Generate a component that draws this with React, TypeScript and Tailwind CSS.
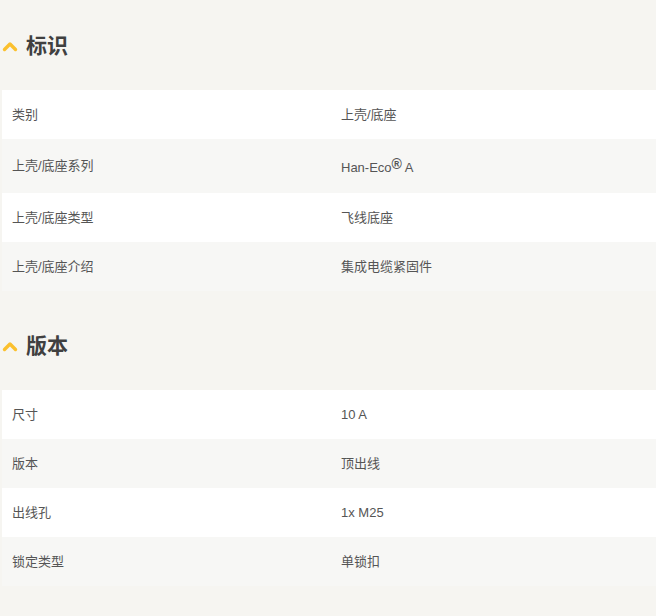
import React from 'react';

interface Row {
    label: string;
    value: React.ReactNode;
    tall?: boolean;
}

const sections: { title: string; rows: Row[] }[] = [
    {
        title: '标识',
        rows: [
            { label: '类别', value: '上壳/底座' },
            {
                label: '上壳/底座系列',
                value: <>Han-Eco<sup className="relative -top-[3px] text-[14px] font-bold">®</sup> A</>,
                tall: true,
            },
            { label: '上壳/底座类型', value: '飞线底座' },
            { label: '上壳/底座介绍', value: '集成电缆紧固件' },
        ],
    },
    {
        title: '版本',
        rows: [
            { label: '尺寸', value: '10 A' },
            { label: '版本', value: '顶出线' },
            { label: '出线孔', value: '1x M25' },
            { label: '锁定类型', value: '单锁扣' },
        ],
    },
];

const Chevron = () => (
    <svg width="16" height="12" viewBox="0 0 16 12" className="ml-[2px]">
        <path d="M2.5 9.5 L8 4 L13.5 9.5" fill="none" stroke="#fbc02d" strokeWidth="3.4" strokeLinecap="round" strokeLinejoin="round" />
    </svg>
);

const App: React.FC = () => {
    return (
        <div
            className="min-h-[616px] w-[656px] bg-[#f6f5f1] pt-[24px]"
            style={{ fontFamily: '"Liberation Sans", "Noto Sans CJK SC", sans-serif' }}
        >
            <div className="flex flex-col gap-[33px]">
                {sections.map((section) => (
                    <div key={section.title}>
                        <div className="mb-[22px] flex h-[44px] items-center gap-[8px]">
                            <Chevron />
                            <h2 className="text-[21px] font-bold text-[#404040]">{section.title}</h2>
                        </div>
                        <div className="ml-[2px]">
                            {section.rows.map((row, index) => (
                                <div
                                    key={row.label}
                                    className={`grid grid-cols-2 items-center text-[13px] text-[#555] ${row.tall ? 'h-[54px] pt-[3px]' : 'h-[49px]'} ${index % 2 === 0 ? 'bg-white' : 'bg-[#f7f7f5]'}`}
                                >
                                    <div className={`pl-[10px] ${row.tall ? '-mt-[3px]' : ''}`}>{row.label}</div>
                                    <div className="pl-[12px]">{row.value}</div>
                                </div>
                            ))}
                        </div>
                    </div>
                ))}
            </div>
        </div>
    );
};

export default App;
